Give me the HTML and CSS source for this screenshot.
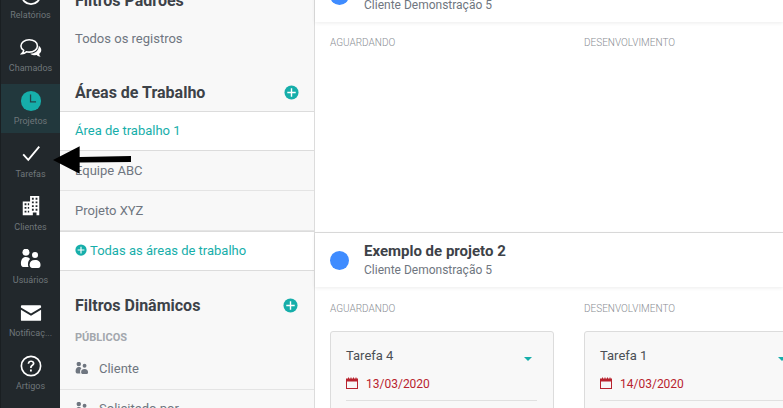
FILE: index.html
```html
<!DOCTYPE html>
<html lang="pt-BR">
<head>
    <meta charset="UTF-8">
    <title>Tarefas</title>
    <link rel="stylesheet" href="styles.css">
</head>
<body>
    <div class="app">
        <nav class="sidebar">
            <a class="nav-item">
                <svg class="nav-icon" viewBox="0 0 24 24"><circle cx="12" cy="12" r="10" fill="none" stroke="#fff" stroke-width="2"/></svg>
                <span>Relatórios</span>
            </a>
            <a class="nav-item">
                <svg class="nav-icon" viewBox="0 0 24 24"><path d="M10 3c-5 0-9 2.900-9 6.700 0 2 1.200 3.700 3 5-.2 1.400-1 2.600-2 3.500 1.900-.1 3.700-.9 5-2 1 .2 2 .3 3 .3 5 0 9-2.900 9-6.800S15 3 10 3z" fill="none" stroke="#fff" stroke-width="1.700"/><path d="M20.500 9.500c1.700 1.200 2.700 2.800 2.700 4.700 0 1.700-.9 3.200-2.300 4.300.2 1.200.8 2.200 1.600 3-1.700-.1-3.200-.8-4.400-1.800-1 .2-5 .3-7-1.500 5 0 9.500-3 9.400-8.700z" fill="#fff"/></svg>
                <span>Chamados</span>
            </a>
            <a class="nav-item active">
                <svg class="nav-icon" viewBox="0 0 24 24"><circle cx="12" cy="12" r="11" fill="#16aeaa"/><path d="M11.500 5v8h6" fill="none" stroke="#22444a" stroke-width="1.400"/></svg>
                <span>Projetos</span>
            </a>
            <a class="nav-item">
                <svg class="nav-icon" viewBox="0 0 24 24"><path d="M3.500 12.500l5.500 6L21 4" fill="none" stroke="#fff" stroke-width="2"/></svg>
                <span>Tarefas</span>
            </a>
            <a class="nav-item">
                <svg class="nav-icon" viewBox="0 0 24 24"><path fill="#fff" fill-rule="evenodd" d="M3 6h8V0h10v21H3zM13 2v2h2V2zM17 2v2h2V2zM13 6v2h2V6zM17 6v2h2V6zM13 10v2h2v-2zM17 10v2h2v-2zM13 14v2h2v-2zM17 14v2h2v-2zM5 8v2h2V8zM8.500 8v2h1.500V8zM5 12v2h2v-2zM8.500 12v2h1.500v-2zM5 16v2h2v-2zM8.500 16v2h1.500v-2zM14 18v3h4v-3z"/></svg>
                <span>Clientes</span>
            </a>
            <a class="nav-item">
                <svg class="nav-icon" viewBox="0 0 24 24"><g fill="#fff"><circle cx="6.500" cy="3.500" r="3.800"/><circle cx="16.400" cy="6.500" r="3.300"/><path d="M1 16c0-4.500 2-7.300 5.500-7.300 2 0 3.500.8 4.500 2.200-1.500 1.300-2.300 3.500-2.300 6 0 1 .2 2 .6 2.700H3.500C2 19.600 1 18 1 16z"/><path d="M10.500 17c0-3 2-5 5.900-5s6 2.200 6 5.500c0 2-1 3.200-2.500 3.200h-6.500c-1.800 0-2.900-1.500-2.900-3.700z"/></g></svg>
                <span>Usuários</span>
            </a>
            <a class="nav-item">
                <svg class="nav-icon" viewBox="0 0 24 24"><path fill="#fff" d="M2 3.500h20c.6 0 1 .4 1 1V6l-11 6.500L1 6V4.500c0-.6.4-1 1-1zM1 8.500l11 6.500 11-6.500V19.500c0 .6-.4 1-1 1H2c-.6 0-1-.4-1-1z"/></svg>
                <span>Notificaç...</span>
            </a>
            <a class="nav-item">
                <svg class="nav-icon" viewBox="0 0 24 24"><circle cx="12" cy="12" r="10.500" fill="none" stroke="#fff" stroke-width="1.800"/><path d="M8.300 9.500c0-2.300 1.700-3.600 3.800-3.600s3.700 1.200 3.700 3.200c0 2.800-3 2.700-3 5h-1.800c0-3.400 2.900-3.300 2.900-5 0-.9-.8-1.500-1.800-1.500s-2 .7-2 1.900zM10.900 15.800h2v2.300h-2z" fill="#fff"/></svg>
                <span>Artigos</span>
            </a>
        </nav>

        <aside class="filters">
            <h2 class="filters-title first">Filtros Padrões</h2>
            <div class="filters-row plain">Todos os registros</div>

            <div class="filters-head">
                <h2 class="filters-title">Áreas de Trabalho</h2>
                <svg class="plus" viewBox="0 0 16 16"><circle cx="8" cy="8" r="7.500" fill="#16aeaa"/><path d="M8 3.500v9M3.500 8h9" stroke="#fff" stroke-width="1.500"/></svg>
            </div>
            <ul class="filters-list">
                <li class="selected">Área de trabalho 1</li>
                <li>Equipe ABC</li>
                <li>Projeto XYZ</li>
                <li class="selected all">
                    <svg class="plus small" viewBox="0 0 16 16"><circle cx="8" cy="8" r="7.500" fill="#16aeaa"/><path d="M8 3.500v9M3.500 8h9" stroke="#fff" stroke-width="1.500"/></svg>
                    Todas as áreas de trabalho
                </li>
            </ul>

            <div class="filters-head dynamic">
                <h2 class="filters-title">Filtros Dinâmicos</h2>
                <svg class="plus" viewBox="0 0 16 16"><circle cx="8" cy="8" r="7.500" fill="#16aeaa"/><path d="M8 3.500v9M3.500 8h9" stroke="#fff" stroke-width="1.500"/></svg>
            </div>
            <div class="filters-sub">PÚBLICOS</div>
            <ul class="filters-list public">
                <li>
                    <svg class="people" viewBox="0 0 24 24"><g fill="#6f7680"><circle cx="6.500" cy="3.500" r="3.800"/><circle cx="16.400" cy="6.500" r="3.300"/><path d="M1 16c0-4.500 2-7.300 5.500-7.300 2 0 3.500.8 4.500 2.200-1.500 1.300-2.300 3.500-2.300 6 0 1 .2 2 .6 2.700H3.500C2 19.600 1 18 1 16z"/><path d="M10.500 17c0-3 2-5 5.900-5s6 2.200 6 5.500c0 2-1 3.200-2.500 3.200h-6.500c-1.800 0-2.900-1.500-2.900-3.700z"/></g></svg>
                    Cliente
                </li>
                <li>
                    <svg class="people" viewBox="0 0 24 24"><g fill="#6f7680"><circle cx="6.500" cy="3.500" r="3.800"/><circle cx="16.400" cy="6.500" r="3.300"/><path d="M1 16c0-4.500 2-7.300 5.500-7.300 2 0 3.500.8 4.500 2.200-1.500 1.300-2.300 3.500-2.300 6 0 1 .2 2 .6 2.700H3.500C2 19.600 1 18 1 16z"/><path d="M10.500 17c0-3 2-5 5.900-5s6 2.200 6 5.500c0 2-1 3.200-2.500 3.200h-6.500c-1.800 0-2.900-1.500-2.900-3.700z"/></g></svg>
                    Solicitado por
                </li>
            </ul>
        </aside>

        <main class="board">
            <section class="project first-project">
                <header class="project-head">
                    <span class="project-dot"></span>
                    <div>
                        <div class="project-name">Exemplo de projeto 1</div>
                        <div class="project-client">Cliente Demonstração 5</div>
                    </div>
                </header>
                <div class="columns">
                    <div class="column"><div class="column-title">AGUARDANDO</div></div>
                    <div class="column"><div class="column-title">DESENVOLVIMENTO</div></div>
                </div>
            </section>

            <section class="project">
                <header class="project-head">
                    <span class="project-dot"></span>
                    <div>
                        <div class="project-name">Exemplo de projeto 2</div>
                        <div class="project-client">Cliente Demonstração 5</div>
                    </div>
                </header>
                <div class="columns">
                    <div class="column">
                        <div class="column-title">AGUARDANDO</div>
                        <div class="card">
                            <div class="card-top">
                                <span>Tarefa 4</span>
                                <span class="caret"></span>
                            </div>
                            <div class="card-date">
                                <svg class="calendar" viewBox="0 0 12 12"><path fill="#b8232e" fill-rule="evenodd" d="M0 1.500h2V.500h1v1h1.500V.500h1v1H7V.500h1v1h1.500V.500h1v1H12V12H0zM1 4.500V11h10V4.500z"/></svg>
                                13/03/2020
                            </div>
                            <div class="card-line"></div>
                        </div>
                    </div>
                    <div class="column">
                        <div class="column-title">DESENVOLVIMENTO</div>
                        <div class="card">
                            <div class="card-top">
                                <span>Tarefa 1</span>
                                <span class="caret"></span>
                            </div>
                            <div class="card-date">
                                <svg class="calendar" viewBox="0 0 12 12"><path fill="#b8232e" fill-rule="evenodd" d="M0 1.500h2V.500h1v1h1.500V.500h1v1H7V.500h1v1h1.500V.500h1v1H12V12H0zM1 4.500V11h10V4.500z"/></svg>
                                14/03/2020
                            </div>
                            <div class="card-line"></div>
                        </div>
                    </div>
                </div>
            </section>
        </main>

        <svg class="pointer" viewBox="0 0 80 30"><path fill="#000" d="M0 15L27 1v11l52-1v6l-52 .5V29z"/></svg>
    </div>
</body>
</html>
```

FILE: styles.css
```css
* {
    box-sizing: border-box;
}
html, body {
    margin: 0;
    padding: 0;
    height: 100%;
    overflow: hidden;
}
body {
    font-family: Roboto, "Liberation Sans", sans-serif;
    background-color: #fff;
    color: #3d4248;
}
.app {
    position: relative;
    display: flex;
    width: 783px;
    height: 408px;
    overflow: hidden;
}

/* menu lateral */
.sidebar {
    flex: 0 0 60px;
    display: flex;
    flex-direction: column;
    gap: 4px;
    margin-top: -22px;
    background-color: #22282c;
    border-left: 1px solid #1a1f22;
}
.nav-item {
    flex: 0 0 49px;
    display: flex;
    flex-direction: column;
    align-items: center;
    padding-top: 6px;
    font-size: 9px;
    line-height: 11px;
    color: #6f767a;
}
.nav-item.active {
    background-color: #22383d;
}
.nav-icon {
    width: 22px;
    height: 22px;
    margin-bottom: 4px;
    flex: none;
}

/* filtros */
.filters {
    flex: 0 0 255px;
    margin-top: -13px;
    background-color: #f8f8f8;
    border-right: 1px solid #dcdcdc;
}
.filters-title {
    margin: 0;
    font-size: 16px;
    line-height: 20px;
    font-weight: 700;
    color: #3d4248;
}
.filters-title.first {
    padding: 4px 15px 0;
}
.filters-row {
    font-size: 13px;
    color: #6f7680;
}
.filters-row.plain {
    padding: 18px 15px 0;
    line-height: 20px;
}
.filters-head {
    display: flex;
    justify-content: space-between;
    align-items: center;
    margin-top: 33px;
    padding: 0 15px 7px;
    height: 30px;
    border-bottom: 1px solid #dcdcdc;
}
.filters-head.dynamic {
    margin-top: 24px;
    border-bottom: none;
    height: 22px;
    padding-bottom: 0;
}
.filters-head.dynamic .plus {
    margin-right: 1px;
}
.plus {
    width: 15px;
    height: 15px;
    margin-top: -2px;
    flex: none;
}
.plus.small {
    width: 12px;
    height: 12px;
    margin-top: 0;
    margin-right: 3px;
}
.filters-list {
    list-style: none;
    margin: 0;
    padding: 0;
    font-size: 13px;
    color: #6f7680;
}
.filters-list li {
    display: flex;
    align-items: center;
    height: 40px;
    padding: 0 15px;
    border-bottom: 1px solid #e4e4e4;
}
.filters-list li.selected {
    height: 39px;
    padding-bottom: 2px;
    background-color: #fff;
    color: #16aeaa;
    border-bottom-color: #dcdcdc;
}
.filters-list li.all {
    border-top: 1px solid #dcdcdc;
    height: 40px;
}
.filters-list.public li {
    padding-bottom: 2px;
}
.filters-sub {
    margin-top: 14px;
    padding: 0 15px;
    font-size: 11px;
    line-height: 14px;
    font-weight: 700;
    color: #a3a7ad;
}
.filters-list.public {
    margin-top: 5px;
}
.people {
    width: 14px;
    height: 14px;
    margin-right: 10px;
}

/* quadro de projetos */
.board {
    flex: 1;
    min-width: 0;
    margin-top: -32px;
}
.project-head {
    display: flex;
    align-items: center;
    gap: 15px;
    height: 54px;
    padding-left: 15px;
    background-color: #fff;
    box-shadow: 0 1px 4px rgba(0,0,0,0.08);
    position: relative;
}
.project-dot {
    flex: none;
    width: 19px;
    height: 19px;
    margin-top: 1px;
    border-radius: 50%;
    background-color: #3f8cff;
}
.project-name {
    font-size: 15px;
    line-height: 18px;
    font-weight: 700;
    color: #3d4248;
}
.project-client {
    margin-top: 2px;
    font-size: 12px;
    line-height: 16px;
    color: #6f7680;
}
.first-project {
    border-bottom: 1px solid #dcdcdc;
}
.first-project .columns {
    height: 210px;
}
.first-project .column-title {
    padding-top: 14px;
}
.columns {
    display: flex;
    gap: 30px;
    padding-left: 15px;
    width: 800px;
}
.column {
    flex: 0 0 224px;
}
.column-title {
    padding-top: 15px;
    font-size: 10px;
    line-height: 13px;
    font-weight: 300;
    color: #8a8e94;
}
.card {
    margin-top: 16px;
    height: 110px;
    padding: 14px 16px 0 15px;
    background-color: #f8f8f8;
    border: 1px solid #dcdcdc;
    border-radius: 3px;
}
.card-top {
    display: flex;
    justify-content: space-between;
    align-items: center;
    font-size: 13px;
    line-height: 20px;
    color: #4a4f55;
}
.caret {
    width: 0;
    height: 0;
    margin-top: 6px;
    margin-right: 5px;
    border-left: 4px solid transparent;
    border-right: 4px solid transparent;
    border-top: 4px solid #16aeaa;
}
.card-date {
    display: flex;
    align-items: center;
    gap: 8px;
    margin-top: 10px;
    font-size: 12px;
    line-height: 16px;
    color: #b8232e;
}
.calendar {
    width: 12px;
    height: 12px;
    margin-top: -2px;
}
.card-line {
    margin-top: 8px;
    border-top: 1px solid #e0e0e0;
}

/* seta por cima da tela */
.pointer {
    position: absolute;
    left: 53px;
    top: 145px;
    width: 79px;
    height: 30px;
}
```
